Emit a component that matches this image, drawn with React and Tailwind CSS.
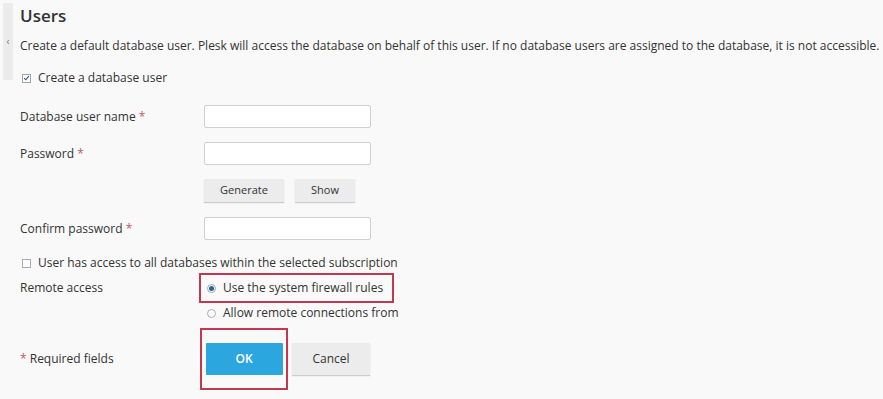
export default function App() {
  return (
    <div className="relative min-h-screen w-[883px] h-[399px] overflow-hidden bg-[#f9f9f9] text-[12px] text-[#333] font-['Open_Sans',sans-serif]">
      <div className="absolute left-[3px] top-[3px] flex h-[77px] w-[10px] items-center justify-center bg-[#ececec] text-[10px] text-[#777]">
        ‹
      </div>
      <div className="pl-[20px] pt-[4px]">
        <h2 className="text-[17px] font-semibold leading-[24px] text-[#333]">Users</h2>
        <p className="mt-[10px] leading-[16px]">
          Create a default database user. Plesk will access the database on behalf of this user. If no database users are assigned to the database, it is not accessible.
        </p>
        <label className="mt-[16px] flex items-center gap-[7px] pl-[2px] leading-[16px]">
          <span className="flex h-[9px] w-[9px] items-center justify-center border border-[#9aa] bg-white">
            <svg viewBox="0 0 10 10" className="h-[8px] w-[8px]"><path d="M1.5 5.2 L4 7.5 L8.5 2" fill="none" stroke="#3a5a8a" strokeWidth="1.6" /></svg>
          </span>
          Create a database user
        </label>

        <div className="mt-[19px] grid grid-cols-[184px_1fr] items-center">
          <span>Database user name <span className="text-[#c2586a]">*</span></span>
          <div className="h-[23px] w-[167px] rounded-[2px] border border-[#d0d0d0] bg-white" />
        </div>
        <div className="mt-[14px] grid grid-cols-[184px_1fr] items-center">
          <span>Password <span className="text-[#c2586a]">*</span></span>
          <div className="h-[23px] w-[167px] rounded-[2px] border border-[#d0d0d0] bg-white" />
        </div>
        <div className="mt-[14px] grid grid-cols-[184px_1fr]">
          <span />
          <div className="flex gap-[11px] text-[11px]">
            <button className="h-[23px] w-[80px] bg-[#ececec] shadow-[0_1px_1px_#ccc]">Generate</button>
            <button className="h-[23px] w-[60px] bg-[#ececec] shadow-[0_1px_1px_#ccc]">Show</button>
          </div>
        </div>
        <div className="mt-[15px] grid grid-cols-[184px_1fr] items-center">
          <span>Confirm password <span className="text-[#c2586a]">*</span></span>
          <div className="h-[23px] w-[167px] rounded-[2px] border border-[#d0d0d0] bg-white" />
        </div>
        <label className="mt-[15px] flex items-center gap-[7px] pl-[2px] leading-[16px]">
          <span className="h-[9px] w-[9px] border border-[#aab] bg-white" />
          User has access to all databases within the selected subscription
        </label>

        <div className="mt-[2px] grid grid-cols-[179px_1fr]">
          <span className="pt-[7px] leading-[16px]">Remote access</span>
          <div className="flex flex-col">
            <div className="flex h-[30px] w-[195px] items-center gap-[7px] border-2 border-[#c0394e] pl-[6px] leading-[16px]">
              <span className="flex h-[9px] w-[9px] items-center justify-center rounded-full border border-[#9ab] bg-white">
                <span className="h-[5px] w-[5px] rounded-full bg-[#2f5f8f]" />
              </span>
              Use the system firewall rules
            </div>
            <div className="mt-[2px] flex items-center gap-[7px] pl-[8px] leading-[16px]">
              <span className="h-[9px] w-[9px] rounded-full border border-[#aab] bg-white" />
              Allow remote connections from
            </div>
          </div>
        </div>

        <div className="mt-[7px] grid grid-cols-[180px_1fr] items-center">
          <span><span className="text-[#c2586a]">*</span> Required fields</span>
          <div className="flex items-center gap-[4px]">
            <div className="flex h-[62px] w-[88px] items-center justify-center border-2 border-[#c0394e]">
              <button className="h-[32px] w-[77px] rounded-[1px] bg-[#2ba6de] text-[12px] font-semibold text-white">OK</button>
            </div>
            <button className="h-[32px] w-[78px] bg-[#ececec] text-[12px] shadow-[0_1px_1px_#ccc]">Cancel</button>
          </div>
        </div>
      </div>
    </div>
  );
}
